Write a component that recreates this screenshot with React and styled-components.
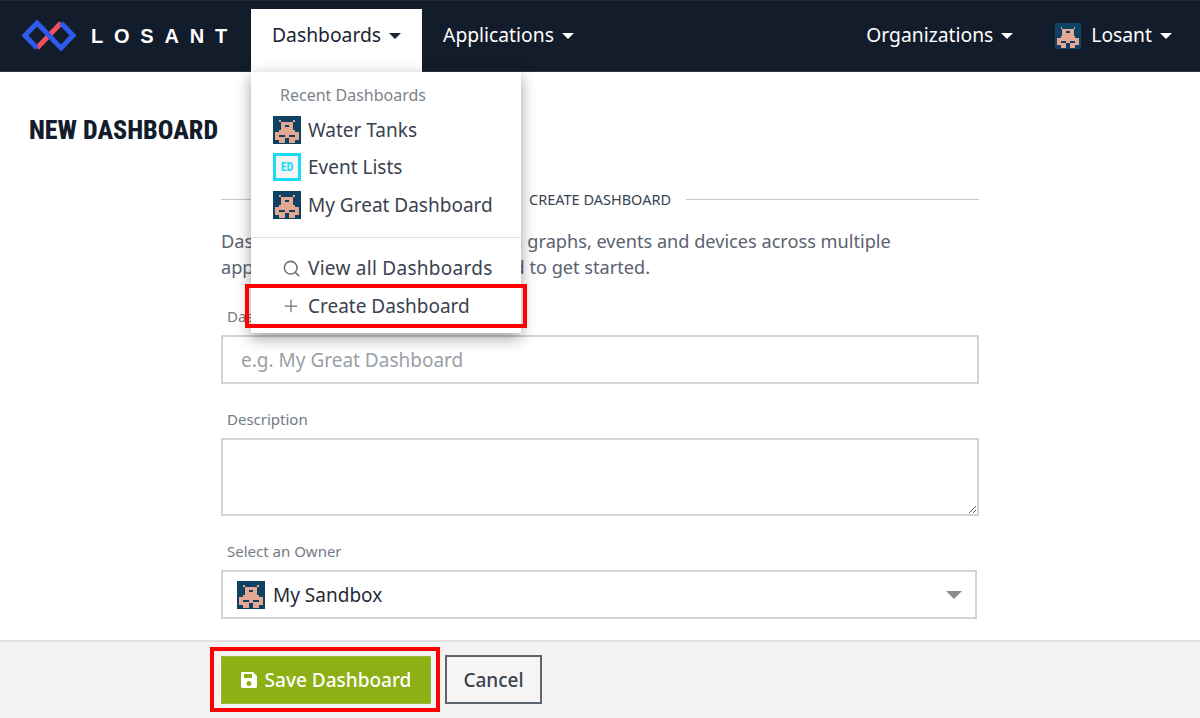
import React from "react";
import styled, { createGlobalStyle } from "styled-components";
import { Search, Plus } from "lucide-react";

const Global = createGlobalStyle`
  html, body { margin: 0; padding: 0; background: #fff; }
  body { font-family: "Noto Sans", "Open Sans", sans-serif; color: #3a4250; }
  * { box-sizing: border-box; }
`;

const Page = styled.div`
  width: 1200px;
  height: 718px;
  display: flex;
  flex-direction: column;
  overflow: hidden;
  position: relative;
`;

const Navbar = styled.header`
  height: 72px;
  flex: none;
  background: #121c2b;
  border-top: 1px solid #1f2937;
  border-bottom: 1px solid #2a3340;
  display: flex;
  align-items: flex-end;
  padding-left: 22px;
  padding-right: 7px;
`;

const Brand = styled.div`
  display: flex;
  align-items: center;
  align-self: center;
  gap: 15px;
  width: 229px;
  color: #fff;
  font-family: "Liberation Sans", sans-serif;
  font-weight: 700;
  font-size: 20px;
  letter-spacing: 10.8px;
`;

const NavItem = styled.div`
  display: flex;
  align-items: center;
  gap: 8px;
  height: 63px;
  padding: 0 21px 13px;
  font-size: 19.3px;
  color: ${(p) => (p.$active ? "#1a2433" : "#fff")};
  background: ${(p) => (p.$active ? "#fff" : "transparent")};
  position: relative;
  top: 1px;
`;

const NavAvatar = styled.span`
  display: flex;
  margin-right: 2px;
  margin-top: 4px;
`;

const Caret = styled.span`
  display: inline-block;
  width: 0;
  height: 0;
  margin-top: 3px;
  border-left: 6px solid transparent;
  border-right: 6px solid transparent;
  border-top: 6px solid currentColor;
`;

const Spacer = styled.div`
  flex: 1;
`;

const Main = styled.main`
  flex: 1;
  position: relative;
`;

const Title = styled.h1`
  margin: 0;
  padding: 43px 0 0 29px;
  font-family: "Liberation Sans Narrow", "Roboto Condensed", "Liberation Sans", sans-serif;
  font-weight: 800;
  font-size: 26px;
  line-height: 30px;
  color: #121c2b;
`;

const Form = styled.div`
  width: 758px;
  margin: 44px 0 0 221px;
`;

const Divider = styled.div`
  display: flex;
  align-items: center;
  gap: 15px;
  height: 20px;
  font-size: 14.5px;
  color: #3a4250;
  &::before, &::after {
    content: "";
    flex: 1;
    height: 1px;
    background: #c8c8c8;
  }
`;

const Intro = styled.p`
  margin: 19px 0 0;
  font-size: 18.15px;
  line-height: 26px;
  color: #5a6270;
  white-space: pre;
`;

const Label = styled.label`
  display: block;
  margin: ${(p) => p.$top || 0}px 0 9px 6px;
  font-size: 15px;
  line-height: 20px;
  color: #737a85;
`;

const Input = styled.input`
  display: block;
  width: 100%;
  height: 49px;
  border: 2px solid #d4d4d4;
  padding: 0 18px;
  font-family: inherit;
  font-size: 19px;
  outline: none;
  &::placeholder { color: #9a9ea6; opacity: 1; }
`;

const TextArea = styled.textarea`
  display: block;
  width: 100%;
  height: 78px;
  border: 2px solid #d4d4d4;
  outline: none;
`;

const Select = styled.div`
  display: flex;
  align-items: center;
  gap: 8px;
  width: 756px;
  height: 49px;
  border: 2px solid #d4d4d4;
  padding: 0 13px 0 14px;
  font-size: 19px;
  color: #1f2937;
`;

const SelectValue = styled.span`
  flex: 1;
`;

const SelectCaret = styled(Caret)`
  flex: none;
  margin-top: 0;
  color: #8c8c8c;
  border-left-width: 8px;
  border-right-width: 8px;
  border-top-width: 8px;
`;

const Footer = styled.footer`
  height: 78px;
  flex: none;
  background: #f4f3f2;
  border-top: 2px solid #e2e1e0;
  display: flex;
  align-items: flex-start;
  gap: 5px;
  padding: 5px 0 0 210px;
`;

const SaveHighlight = styled.div`
  border: 4px solid #f00;
  padding: 5px 5px 4px 7px;
`;

const SaveButton = styled.button`
  display: flex;
  align-items: center;
  justify-content: center;
  gap: 8px;
  width: 210px;
  height: 48px;
  border: 1px solid #9db53a;
  background: #8db014;
  color: #fff;
  font-family: inherit;
  font-weight: 500;
  font-size: 19px;
`;

const CancelButton = styled.button`
  width: 97px;
  height: 49px;
  margin-top: 8px;
  border: 2px solid #5c6470;
  background: #f6f5f4;
  color: #3a4250;
  font-family: inherit;
  font-weight: 500;
  font-size: 19px;
`;

const Menu = styled.div`
  position: absolute;
  left: 251px;
  top: 0;
  width: 270px;
  height: 261px;
  background: #fff;
  box-shadow: 0 5px 14px rgba(0, 0, 0, 0.38);
  padding-top: 12px;
`;

const MenuHeading = styled.div`
  padding-left: 29px;
  margin-bottom: 5px;
  font-size: 16px;
  line-height: 22px;
  color: #7d838c;
`;

const MenuRow = styled.div`
  display: flex;
  align-items: center;
  gap: 7px;
  height: 37.5px;
  padding-left: 22px;
  font-size: 19px;
  letter-spacing: ${(p) => p.$spacing || 0}px;
  color: #3a4250;
  position: relative;
`;

const MenuIcon = styled.span`
  width: 28px;
  padding-left: 8px;
  display: flex;
  justify-content: center;
  color: #6b7280;
`;

const MenuRule = styled.div`
  height: 1px;
  margin: 13px 0 12px;
  background: #e0e0e0;
`;

const RowHighlight = styled.div`
  position: absolute;
  left: -6px;
  right: -6px;
  top: -3px;
  bottom: -3px;
  border: 4px solid #f00;
`;

const EventBadge = styled.span`
  width: 28px;
  height: 28px;
  display: flex;
  align-items: center;
  justify-content: center;
  border: 3px solid #19dcf5;
  background: #f6f5f4;
  color: #19dcf5;
  font-family: "Roboto Condensed", "Liberation Sans", sans-serif;
  font-weight: 700;
  font-size: 12px;
`;

function Avatar({ size = 28 }) {
  return (
    <svg width={size} height={size} viewBox="0 0 14 14" shapeRendering="crispEdges" style={{ flex: "none" }}>
      <rect width="14" height="14" fill="#0f4163" />
      <path
        fill="#e3a793"
        d="M3 2h1v1H3zM10 2h1v1h-1zM4 3h6v5H4zM3 7h8v1H3zM1 8h12v4H1zM3 12h3v1.5H3zM8 12h3v1.5H8z"
      />
      <path fill="#0f4163" d="M6 4.5h2v1H6zM3 9.5h3v1H3zM8 9.5h3v1H8zM6 11h2v2.5H6z" />
    </svg>
  );
}

function Logo() {
  return (
    <svg width="54" height="32" viewBox="0 0 54 32" style={{ flex: "none" }}>
      <path d="M15 28 L39 3" fill="none" stroke="#f0505f" strokeWidth="5" />
      <path d="M15 28 L3 15.5 L15 3 L39 28 L51 15.5 L39 3" fill="none" stroke="#2f5bea" strokeWidth="5" />
    </svg>
  );
}

function SaveIcon() {
  return (
    <svg width="16" height="16" viewBox="0 0 16 16">
      <path
        fill="#fff"
        fillRule="evenodd"
        d="M1 0h11l4 4v11l-1 1H1l-1-1V1zM3 2v4h8V2zM8 9a2.5 2.5 0 1 0 0 5 2.5 2.5 0 0 0 0-5z"
      />
    </svg>
  );
}

export default function App() {
  return (
    <Page>
      <Global />
      <Navbar>
        <Brand>
          <Logo />
          LOSANT
        </Brand>
        <NavItem $active>
          Dashboards <Caret />
        </NavItem>
        <NavItem>
          Applications <Caret />
        </NavItem>
        <Spacer />
        <NavItem>
          Organizations <Caret />
        </NavItem>
        <NavItem>
          <NavAvatar><Avatar size={26} /></NavAvatar> Losant <Caret />
        </NavItem>
      </Navbar>
      <Main>
        <Title>NEW DASHBOARD</Title>
        <Form>
          <Divider>CREATE DASHBOARD</Divider>
          <Intro>
            {"Dashboards let you display gauges, graphs, events and devices across multiple\napplications. Use Create Dashboard to get started."}
          </Intro>
          <Label $top={26}>Dashboard Name</Label>
          <Input placeholder="e.g. My Great Dashboard" />
          <Label $top={25}>Description</Label>
          <TextArea />
          <Label $top={25}>Select an Owner</Label>
          <Select>
            <Avatar />
            <SelectValue>My Sandbox</SelectValue>
            <SelectCaret />
          </Select>
        </Form>
        <Menu>
          <MenuHeading>Recent Dashboards</MenuHeading>
          <MenuRow>
            <Avatar /> Water Tanks
          </MenuRow>
          <MenuRow>
            <EventBadge>ED</EventBadge> Event Lists
          </MenuRow>
          <MenuRow>
            <Avatar /> My Great Dashboard
          </MenuRow>
          <MenuRule />
          <MenuRow $spacing={0.27}>
            <MenuIcon><Search size={19} /></MenuIcon> View all Dashboards
          </MenuRow>
          <MenuRow>
            <MenuIcon><Plus size={20} strokeWidth={1.5} /></MenuIcon> Create Dashboard
            <RowHighlight />
          </MenuRow>
        </Menu>
      </Main>
      <Footer>
        <SaveHighlight>
          <SaveButton>
            <SaveIcon /> Save Dashboard
          </SaveButton>
        </SaveHighlight>
        <CancelButton>Cancel</CancelButton>
      </Footer>
    </Page>
  );
}
